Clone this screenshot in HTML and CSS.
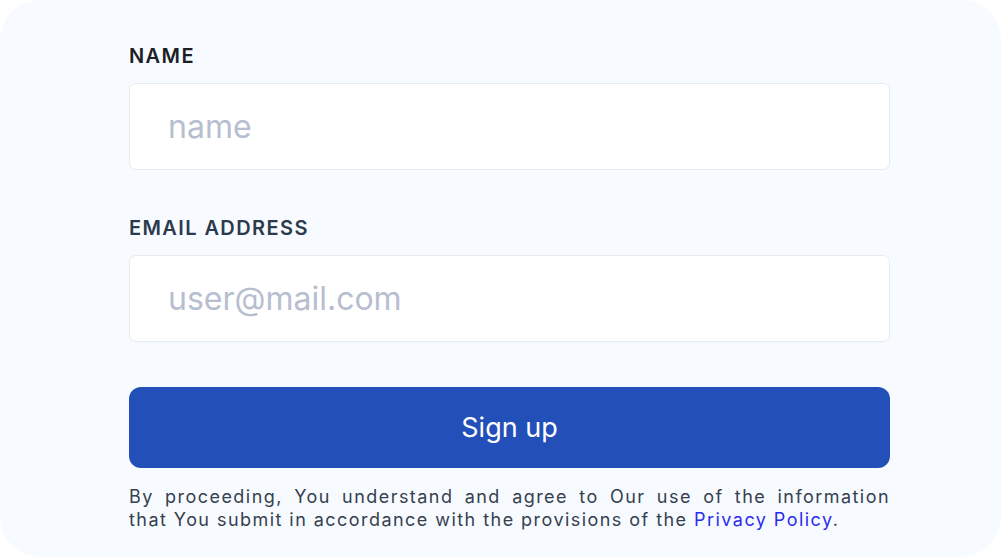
FILE: index.html
```html
<!DOCTYPE html>
<html lang="en">
<head>
<meta charset="utf-8">
<title>Sign up</title>
<link rel="stylesheet" href="styles.css">
</head>
<body>
<div class="card">
  <form class="form">
    <label class="label" for="name">NAME</label>
    <input class="field" id="name" type="text" placeholder="name">
    <label class="label label-email" for="email">EMAIL ADDRESS</label>
    <input class="field" id="email" type="email" placeholder="user@mail.com">
    <button class="btn" type="button">Sign up</button>
    <p class="note"><span class="note-line">By proceeding, You understand and agree to Our use of the information</span> that You submit in accordance with the provisions of the <a class="link" href="#">Privacy Policy</a>.</p>
  </form>
</div>
</body>
</html>
```

FILE: styles.css
```css
* { box-sizing: border-box; }
html, body { margin: 0; padding: 0; background: #ffffff; }
body { font-family: "Inter", "Noto Sans", sans-serif; }
.card {
  width: 1001px;
  height: 557px;
  background: #f7fbff;
  border-radius: 40px;
  padding: 43px 0 0 129px;
}
.form {
  width: 761px;
  display: flex;
  flex-direction: column;
}
.label {
  font-size: 20px;
  font-weight: 600;
  letter-spacing: 1.4px;
  color: #1c1f26;
  line-height: 26px;
  margin-bottom: 14px;
}
.label-email {
  color: #2c3a4d;
  margin-top: 45px;
}
.field {
  height: 87px;
  border: 1.5px solid #e6ebf2;
  border-radius: 7px;
  background: #ffffff;
  padding: 0 0 0 38px;
  font-family: inherit;
  font-size: 32px;
  color: #333;
  outline: none;
}
.field::placeholder { color: #b6bed0; }
.btn {
  margin-top: 45px;
  height: 81px;
  border: none;
  border-radius: 12px;
  background: #234fb8;
  color: #ffffff;
  font-family: inherit;
  font-size: 27px;
  font-weight: 400;
  cursor: pointer;
}
.note {
  margin: 17px 0 0;
  font-size: 18px;
  letter-spacing: 1.45px;
  line-height: 23px;
  color: #36404f;
  text-align: left;
}
.note-line {
  display: block;
  text-align: justify;
  text-align-last: justify;
}
.link { color: #2b2cf0; text-decoration: none; }
```
